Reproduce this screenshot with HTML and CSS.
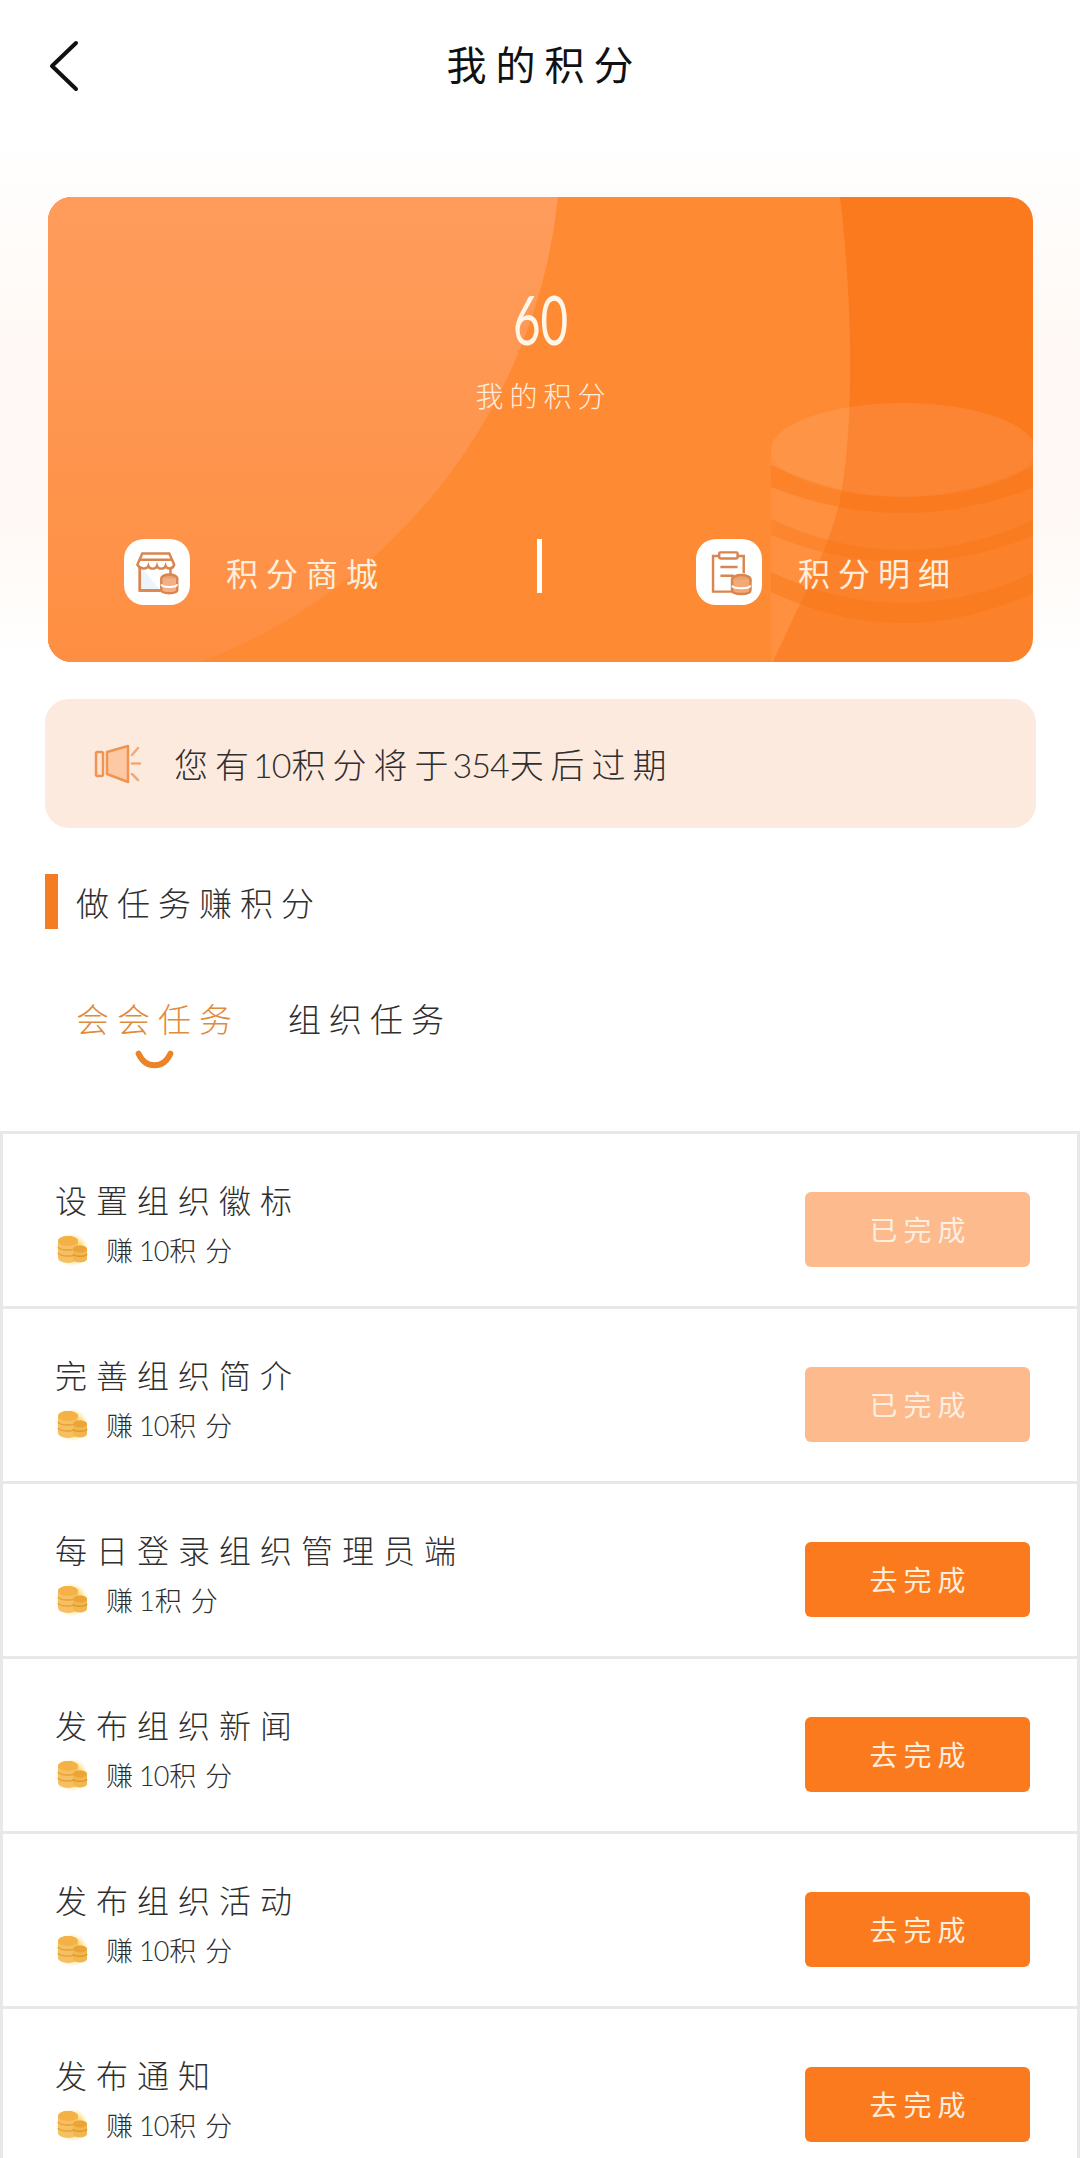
FILE: index.html
```html
<!DOCTYPE html>
<html lang="zh-CN">
<head>
    <meta charset="UTF-8">
    <meta name="viewport" content="width=device-width, initial-scale=1.0">
    <title>我的积分</title>
    <link rel="stylesheet" href="styles.css">
</head>
<body>
    <svg class="defs" width="0" height="0">
        <defs>
            <radialGradient id="coinGlow">
                <stop offset="0.6" stop-color="#ffdc80"/>
                <stop offset="1" stop-color="#ffeebb" stop-opacity="0"/>
            </radialGradient>
            <symbol id="coins" viewBox="0 0 34 34">
                <circle cx="17" cy="17" r="17" fill="url(#coinGlow)"/>
                <path d="M3 8a10 5 0 0 1 20 0V25a10 5 0 0 1-20 0z" fill="#f6c062"/>
                <ellipse cx="13" cy="8" rx="10" ry="5" fill="#f4b145"/>
                <path d="M3 14c2 4 18 4 20 0M3 20c2 4 18 4 20 0" fill="none" stroke="#e5a034" stroke-width="1.500"/>
                <path d="M18 16a7 3.500 0 0 1 14 0V26a7 3.500 0 0 1-14 0z" fill="#f2b64f"/>
                <ellipse cx="25" cy="16" rx="7" ry="3.500" fill="#eca436"/>
                <path d="M18 21c1.500 3 12.500 3 14 0" fill="none" stroke="#dd9629" stroke-width="1.500"/>
            </symbol>
        </defs>
    </svg>

    <header class="topbar">
        <svg class="back-icon" viewBox="0 0 32 52" fill="none" stroke="#111" stroke-width="4" stroke-linecap="round" stroke-linejoin="round">
            <path d="M28 3L4 26l24 23"/>
        </svg>
        <h1>我的积分</h1>
    </header>

    <div class="hero-wrap">
        <section class="score-card">
            <svg class="card-bg" viewBox="0 0 985 465" preserveAspectRatio="none">
                <defs>
                    <linearGradient id="leftShade" x1="0" y1="0" x2="0" y2="1">
                        <stop offset="0" stop-color="#ff9c5c"/>
                        <stop offset="1" stop-color="#fe8f42"/>
                    </linearGradient>
                </defs>
                <path d="M0 0H792C803 90 808 220 792 303C782 350 745 420 725 465H0Z" fill="#fe8a33"/>
                <path d="M0 0H510A560 560 0 0 1 152 465H0Z" fill="url(#leftShade)"/>
                <path d="M723 253A132 47 0 0 1 987 253V465H723Z" fill="#fff" opacity="0.06"/>
                <path d="M723 268Q855 332 987 268V290Q855 342 723 290Z" fill="#f97514" opacity="0.5"/>
                <path d="M723 322Q855 384 987 322V338Q855 392 723 338Z" fill="#f97514" opacity="0.4"/>
                <path d="M723 375Q855 437 987 375V395Q855 457 723 395Z" fill="#f97514" opacity="0.45"/>
                <ellipse cx="855" cy="253" rx="132" ry="47" fill="#fff" opacity="0.04"/>
            </svg>
            <div class="score-main">
                <div class="score-num">60</div>
                <div class="score-label">我的积分</div>
            </div>
            <div class="score-links">
                <a class="score-link">
                    <span class="link-icon">
                        <svg viewBox="0 0 44 44" fill="none" stroke="#d8854f" stroke-width="2">
                            <path d="M8 17V37H25" fill="#eef4fb"/>
                            <path d="M8 17V37H25M33 17v7"/>
                            <path d="M10 7H32L36 16C35 20 30 20 29 17C28 20 23 20 22 17C21 20 16 20 15 17C14 20 8 20 6 16Z" fill="#fff"/>
                            <path d="M8 12H34"/>
                            <ellipse cx="32" cy="27" rx="6.500" ry="3" fill="#eda06a"/>
                            <path d="M25.500 27V37C26 40 38 40 38.500 37V27" fill="#f2b088"/>
                            <path d="M25.500 32C26 35 38 35 38.500 32" stroke="#fff" stroke-width="1.500"/>
                        </svg>
                    </span>
                    <span class="link-text">积分商城</span>
                </a>
                <span class="link-divider"></span>
                <a class="score-link">
                    <span class="link-icon">
                        <svg viewBox="0 0 44 44" fill="none" stroke="#d8854f" stroke-width="2">
                            <path d="M14 9H9V38H26M29 9h5V23"/>
                            <rect x="14" y="6" width="15" height="5" rx="1"/>
                            <path d="M15 18H29M15 25H26"/>
                            <ellipse cx="32" cy="28" rx="7.500" ry="3.500" fill="#eda06a"/>
                            <path d="M24.500 28V37C25 41 39 41 39.500 37V28" fill="#f2a877"/>
                            <path d="M24.500 33C25 36 39 36 39.500 33" stroke="#fff" stroke-width="1.500"/>
                        </svg>
                    </span>
                    <span class="link-text">积分明细</span>
                </a>
            </div>
        </section>
    </div>

    <div class="notice">
        <svg class="notice-icon" viewBox="0 0 48 42" fill="none" stroke="#f0944f" stroke-width="2.500">
            <rect x="2" y="9" width="7" height="24" rx="1.500" fill="#fde4d2"/>
            <path d="M13 9L34 3V39L13 31Z" fill="#fcc9a4" stroke-linejoin="round"/>
            <path d="M38 12l6-7M38 20.500H46M38 31l6 6" stroke-linecap="round" stroke="#f2a877"/>
        </svg>
        <span>您有<span class="num">10</span>积分将于<span class="num">354</span>天后过期</span>
    </div>

    <div class="section-title">
        <span class="section-bar"></span>
        <h2>做任务赚积分</h2>
    </div>

    <div class="tabs">
        <div class="tab tab-active">
            <span>会会任务</span>
            <svg class="tab-smile" viewBox="0 0 43 22" fill="none" stroke="#ec8326" stroke-width="6.500" stroke-linecap="round">
                <path d="M4 4C12 21 31 21 39 4"/>
            </svg>
        </div>
        <div class="tab"><span>组织任务</span></div>
    </div>

    <ul class="task-list">
        <li class="task-row">
            <div class="task-info">
                <div class="task-name">设置组织徽标</div>
                <div class="task-reward"><svg class="coin-icon"><use href="#coins"/></svg><span>赚<span class="num">10</span>积分</span></div>
            </div>
            <button class="task-btn task-btn-done">已完成</button>
        </li>
        <li class="task-row">
            <div class="task-info">
                <div class="task-name">完善组织简介</div>
                <div class="task-reward"><svg class="coin-icon"><use href="#coins"/></svg><span>赚<span class="num">10</span>积分</span></div>
            </div>
            <button class="task-btn task-btn-done">已完成</button>
        </li>
        <li class="task-row">
            <div class="task-info">
                <div class="task-name">每日登录组织管理员端</div>
                <div class="task-reward"><svg class="coin-icon"><use href="#coins"/></svg><span>赚<span class="num">1</span>积分</span></div>
            </div>
            <button class="task-btn">去完成</button>
        </li>
        <li class="task-row">
            <div class="task-info">
                <div class="task-name">发布组织新闻</div>
                <div class="task-reward"><svg class="coin-icon"><use href="#coins"/></svg><span>赚<span class="num">10</span>积分</span></div>
            </div>
            <button class="task-btn">去完成</button>
        </li>
        <li class="task-row">
            <div class="task-info">
                <div class="task-name">发布组织活动</div>
                <div class="task-reward"><svg class="coin-icon"><use href="#coins"/></svg><span>赚<span class="num">10</span>积分</span></div>
            </div>
            <button class="task-btn">去完成</button>
        </li>
        <li class="task-row">
            <div class="task-info">
                <div class="task-name">发布通知</div>
                <div class="task-reward"><svg class="coin-icon"><use href="#coins"/></svg><span>赚<span class="num">10</span>积分</span></div>
            </div>
            <button class="task-btn">去完成</button>
        </li>
    </ul>
</body>
</html>
```

FILE: styles.css
```css
/* General Styles */
html, body {
    height: 2158px;
    overflow: hidden;
}

body {
    margin: 0;
    background-color: #fff;
    color: #2f2f2f;
    font-family: "Noto Sans CJK SC", sans-serif;
    font-weight: 300;
}

.defs {
    display: block;
    height: 0;
}

.num {
    font-family: Lato, sans-serif;
    font-weight: 300;
    letter-spacing: -1px;
    margin: 0 1px 0 -3px;
}

/* Top bar */
.topbar {
    height: 132px;
    box-sizing: border-box;
    padding-bottom: 6px;
    display: flex;
    align-items: center;
    justify-content: center;
    position: relative;
}

.topbar h1 {
    margin: 0;
    font-size: 40px;
    font-weight: 400;
    letter-spacing: 9px;
    color: #111;
    padding-left: 9px;
}

.back-icon {
    position: absolute;
    left: 48px;
    top: 40px;
    width: 32px;
    height: 52px;
}

/* Score card */
.hero-wrap {
    padding: 65px 47px 0 48px;
    background: linear-gradient(to bottom, #fff 0, #fff8f4 45%, #fff8f4 70%, #fff 100%);
}

.score-card {
    height: 465px;
    border-radius: 24px;
    background-color: #fb7a1d;
    position: relative;
    overflow: hidden;
    color: #fff;
}

.card-bg {
    position: absolute;
    left: 0;
    top: 0;
    width: 100%;
    height: 100%;
}

.score-main {
    position: relative;
    padding-top: 88px;
    text-align: center;
}

.score-num {
    font-family: Lato, sans-serif;
    font-size: 68px;
    font-weight: 400;
    line-height: 68px;
    color: #fff6ea;
    transform: scaleX(0.7);
}

.score-label {
    margin-top: 22px;
    font-size: 28px;
    line-height: 40px;
    letter-spacing: 6px;
    padding-left: 6px;
    color: #ffeedd;
}

.score-links {
    position: relative;
    margin-top: 124px;
    display: flex;
    align-items: flex-start;
    justify-content: space-between;
    padding: 0 75px 0 76px;
}

.score-link {
    display: flex;
    align-items: center;
    gap: 36px;
}

.link-icon {
    width: 66px;
    height: 66px;
    border-radius: 20px;
    background-color: #fff;
    display: flex;
    align-items: center;
    justify-content: center;
}

.link-icon svg {
    width: 54px;
    height: 54px;
}

.link-text {
    font-size: 32px;
    font-weight: 400;
    letter-spacing: 8px;
    color: #ffeedd;
}

.link-divider {
    width: 5px;
    height: 54px;
    margin-right: 3px;
    background-color: #fff;
}

/* Notice */
.notice {
    margin: 37px 44px 0 45px;
    height: 129px;
    border-radius: 24px;
    background-color: #fdeadf;
    display: flex;
    align-items: center;
    gap: 32px;
    padding-left: 49px;
    font-size: 34px;
    letter-spacing: 7px;
}

.notice-icon {
    width: 48px;
    height: 42px;
}

/* Section title */
.section-title {
    margin: 46px 0 0 45px;
    display: flex;
    align-items: center;
    gap: 18px;
}

.section-bar {
    width: 13px;
    height: 55px;
    background-color: #f57c20;
}

.section-title h2 {
    margin: 0;
    font-size: 33px;
    font-weight: 300;
    letter-spacing: 8px;
}

/* Tabs */
.tabs {
    margin: 66px 0 0 76px;
    display: flex;
    gap: 48px;
    height: 75px;
}

.tab {
    display: flex;
    flex-direction: column;
    align-items: center;
    font-size: 33px;
    line-height: 46px;
    letter-spacing: 8px;
}

.tab-active {
    color: #e08a3c;
}

.tab-smile {
    margin: 9px 8px 0 0;
    width: 45px;
    height: 23px;
}

/* Task list */
.task-list {
    margin: 61px 0 0;
    padding: 0;
    list-style: none;
    border-top: 3px solid #e8e8e8;
    border-left: 3px solid #e8e8e8;
    border-right: 3px solid #e8e8e8;
}

.task-row {
    height: 175px;
    box-sizing: border-box;
    border-bottom: 3px solid #e8e8e8;
    display: flex;
    align-items: center;
    justify-content: space-between;
    padding: 18px 47px 0 52px;
}

.task-info {
    margin-bottom: 14px;
}

.task-name {
    font-size: 32px;
    line-height: 44px;
    letter-spacing: 9px;
}

.task-reward {
    margin-top: 12px;
    display: flex;
    align-items: center;
    gap: 17px;
    font-size: 27px;
    line-height: 34px;
    letter-spacing: 9px;
}

.coin-icon {
    width: 34px;
    height: 34px;
}

.task-btn {
    width: 225px;
    height: 75px;
    border: none;
    border-radius: 6px;
    background-color: #fb7a1d;
    color: #ffeedd;
    font-family: inherit;
    font-size: 28px;
    font-weight: 400;
    letter-spacing: 6px;
    padding: 0 0 0 6px;
}

.task-btn-done {
    background-color: #fdba8c;
    color: #fdeee0;
}
```
